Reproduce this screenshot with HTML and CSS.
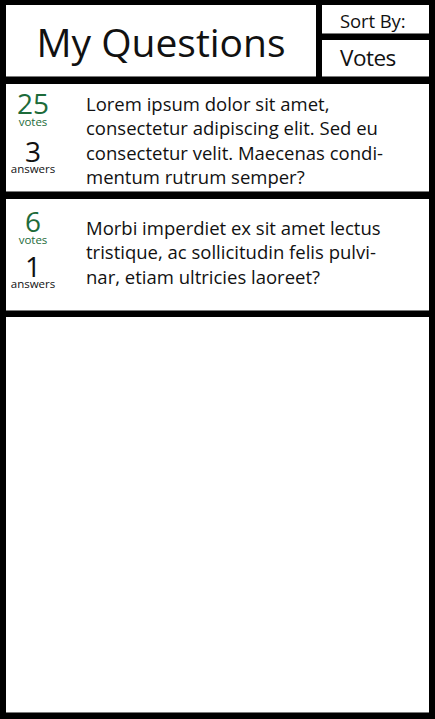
FILE: index.html
```html
<!DOCTYPE html>
<html lang="en">
<head>
<meta charset="utf-8">
<title>My Questions</title>
<link rel="stylesheet" href="styles.css">
</head>
<body>
<div class="page">
  <header class="header">
    <div class="box title-box"><h1 class="title">My Questions</h1></div>
    <div class="sort">
      <div class="box sort-label">Sort By:</div>
      <div class="box sort-value">Votes</div>
    </div>
  </header>

  <article class="box card card-1">
    <div class="stats">
      <div class="num votes-num">25</div>
      <div class="lbl votes-lbl">votes</div>
      <div class="num answers-num">3</div>
      <div class="lbl">answers</div>
    </div>
    <p class="question">Lorem ipsum dolor sit amet,<br>consectetur adipiscing elit. Sed eu<br>consectetur velit. Maecenas condi-<br>mentum rutrum semper?</p>
  </article>

  <article class="box card card-2">
    <div class="stats">
      <div class="num votes-num">6</div>
      <div class="lbl votes-lbl">votes</div>
      <div class="num answers-num">1</div>
      <div class="lbl">answers</div>
    </div>
    <p class="question">Morbi imperdiet ex sit amet lectus<br>tristique, ac sollicitudin felis pulvi-<br>nar, etiam ultricies laoreet?</p>
  </article>

  <section class="box empty"></section>
</div>
</body>
</html>
```

FILE: styles.css
```css
html, body {
  margin: 0;
  padding: 0;
  background: #000;
}

body {
  font-family: "Open Sans", "Noto Sans", sans-serif;
  color: #111;
}

.page {
  width: 435px;
  height: 719px;
  box-sizing: border-box;
  padding: 5px 6px 6px 6px;
  display: flex;
  flex-direction: column;
}

.box {
  background: #fff;
  box-sizing: border-box;
  border-bottom: 1px solid #7a7a7a;
}

.header {
  display: flex;
  gap: 6px;
  height: 72px;
}

.title-box {
  width: 310px;
  display: flex;
  align-items: center;
  justify-content: center;
  padding-top: 2px;
}

.title {
  margin: 0;
  font-size: 39px;
  font-weight: 400;
  line-height: 1;
}

.sort {
  width: 107px;
  display: flex;
  flex-direction: column;
  gap: 6px;
}

.sort-label {
  height: 29px;
  font-size: 18.5px;
  display: flex;
  align-items: center;
  padding-left: 18px;
  padding-top: 2px;
  letter-spacing: -0.1px;
}

.sort-value {
  height: 37px;
  font-size: 22.5px;
  display: flex;
  align-items: center;
  padding-left: 18px;
  padding-bottom: 2px;
  letter-spacing: -0.5px;
}

.card {
  display: flex;
}

.card-1 {
  margin-top: 7px;
  height: 108px;
  padding-top: 7px;
}

.card-2 {
  margin-top: 7px;
  height: 112px;
  padding-top: 10px;
}

.stats {
  width: 54px;
  flex: none;
  display: flex;
  flex-direction: column;
  align-items: center;
}

.num {
  font-size: 28px;
  line-height: 24px;
  height: 24px;
}

.votes-num {
  color: #1d6b3a;
}

.lbl {
  font-size: 11.5px;
  line-height: 12px;
}

.votes-lbl {
  color: #1d6b3a;
  margin-top: 1px;
}

.answers-num {
  margin-top: 11px;
}

.card-2 .answers-num {
  margin-top: 8px;
}

.question {
  margin: 0 0 0 26px;
  font-size: 18.5px;
  line-height: 24.4px;
}

.card-1 .question {
  padding-top: 1px;
}

.card-2 .question {
  padding-top: 7px;
}

.empty {
  margin-top: 6px;
  flex: 1;
}
```
